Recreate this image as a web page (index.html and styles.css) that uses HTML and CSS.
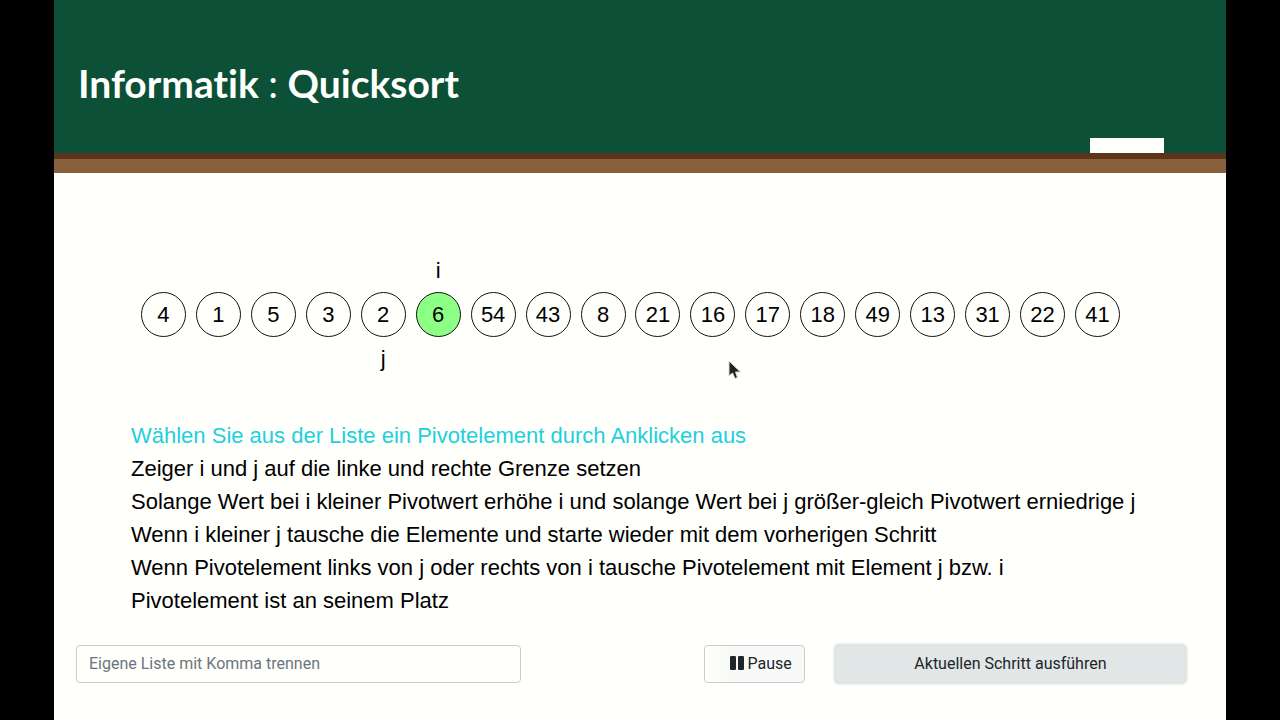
FILE: index.html
```html
<!DOCTYPE html>
<html lang="de">
<head>
    <meta charset="UTF-8">
    <meta name="viewport" content="width=device-width, initial-scale=1.0">
    <title>Informatik : Quicksort</title>
    <link rel="stylesheet" href="styles.css">
</head>

<body>
    <div class="page">
        <header class="board">
            <h1>Informatik <span class="colon">:</span> Quicksort</h1>
            <div class="chalk"></div>
        </header>

        <main>
            <ol class="numbers">
                <li><button class="number">4</button></li>
                <li><button class="number">1</button></li>
                <li><button class="number">5</button></li>
                <li><button class="number">3</button></li>
                <li><button class="number">2</button><span class="pointer-j">j</span></li>
                <li><span class="pointer-i">i</span><button class="number pivot">6</button></li>
                <li><button class="number">54</button></li>
                <li><button class="number">43</button></li>
                <li><button class="number">8</button></li>
                <li><button class="number">21</button></li>
                <li><button class="number">16</button></li>
                <li><button class="number">17</button></li>
                <li><button class="number">18</button></li>
                <li><button class="number">49</button></li>
                <li><button class="number">13</button></li>
                <li><button class="number">31</button></li>
                <li><button class="number">22</button></li>
                <li><button class="number">41</button></li>
            </ol>

            <ul class="steps">
                <li class="active">Wählen Sie aus der Liste ein Pivotelement durch Anklicken aus</li>
                <li>Zeiger i und j auf die linke und rechte Grenze setzen</li>
                <li>Solange Wert bei i kleiner Pivotwert erhöhe i und solange Wert bei j größer-gleich Pivotwert erniedrige j</li>
                <li>Wenn i kleiner j tausche die Elemente und starte wieder mit dem vorherigen Schritt</li>
                <li>Wenn Pivotelement links von j oder rechts von i tausche Pivotelement mit Element j bzw. i</li>
                <li>Pivotelement ist an seinem Platz</li>
            </ul>

            <form class="controls" onsubmit="return false">
                <input type="text" id="liste" aria-label="Eigene Liste" placeholder="Eigene Liste mit Komma trennen">
                <button type="button" class="btn pause">
                    <svg width="14" height="14" viewBox="0 0 14 14" aria-hidden="true">
                        <rect x="0" y="0" width="6" height="14" rx="1.300" />
                        <rect x="8" y="0" width="6" height="14" rx="1.300" />
                    </svg>
                    Pause
                </button>
                <button type="submit" class="btn step">Aktuellen Schritt ausführen</button>
            </form>
        </main>

        <!-- Mauszeiger -->
        <svg class="cursor" width="14" height="20" viewBox="0 0 14 20" aria-hidden="true">
            <path d="M1 1 V16 L4.500 13 L7 18.500 L9.500 17.500 L7.500 12 H12.500 Z" />
        </svg>
    </div>
</body>
</html>
```

FILE: styles.css
```css
* {
    box-sizing: border-box;
}

body {
    margin: 0;
    background: #000;
    color: #000;
    font-family: "Liberation Sans", Arial, sans-serif;
    font-size: 22px;
}

.page {
    position: relative;
    margin: 0 54px;
    min-height: 100vh;
    background: #fffffc;
}

/* Tafel */
.board {
    background: #0d5038;
    border-bottom: 14px solid #88603c;
    box-shadow: inset 0 -6px #5c341b;
    padding: 59px 62px 6px 24px;
}

h1 {
    margin: 0;
    color: #fffffc;
    font-family: Lato, sans-serif;
    font-size: 39px;
    font-weight: 700;
    font-variant-ligatures: none;
    line-height: 48px;
}

.colon {
    font-weight: 400;
}

.chalk {
    width: 74px;
    height: 15px;
    margin: 31px 0 0 auto;
    background: #fffffc;
}

/* Zahlenliste */
.numbers {
    display: grid;
    grid-template-columns: repeat(18, 1fr);
    list-style: none;
    margin: 0;
    padding: 83px 101px 0 82px;
}

.numbers li {
    display: grid;
    grid-template-rows: 36px 45px 42px;
    justify-items: center;
    line-height: 30px;
}

.number {
    grid-row: 2;
    width: 45px;
    height: 45px;
    padding: 0;
    border: 1px solid #111;
    border-radius: 50%;
    background: #fffffc;
    color: #000;
    font: inherit;
    cursor: pointer;
}

.pivot {
    background: #8cff85;
}

.pointer-i {
    grid-row: 1;
}

.pointer-j {
    grid-row: 3;
    padding-top: 7px;
}

/* Ablauf */
.steps {
    list-style: none;
    margin: 40px 77px 0;
    padding: 0;
    line-height: 33px;
}

.active {
    color: #22cfdc;
}

/* Bedienung */
.controls {
    display: grid;
    grid-template-columns: 19fr auto 15fr;
    padding: 28px 40px 36px 22px;
    font-family: Roboto, sans-serif;
    font-size: 16px;
}

.controls input,
.btn {
    height: 38px;
    min-width: 0;
    padding: 0 12px 2px;
    border: 1px solid #c8cecb;
    border-radius: 4px;
    background: #fffffc;
    color: #212529;
    font: inherit;
}

.controls input::placeholder {
    color: #6c757d;
    opacity: 1;
}

.pause {
    display: flex;
    align-items: center;
    justify-content: flex-end;
    gap: 4px;
    width: 101px;
    margin: 0 30px 0 183px;
    background: linear-gradient(to right, #fffffc, #f7faf8 25%);
}

.pause svg {
    fill: #212529;
}

.step {
    border-color: #dae0e0;
    background: #e1e6e6;
    box-shadow: 0 0 0 2px #e9eeec;
}

.cursor {
    position: absolute;
    left: 674px;
    top: 360px;
    fill: #222;
    stroke: #ddd;
    stroke-width: 1;
}
```
